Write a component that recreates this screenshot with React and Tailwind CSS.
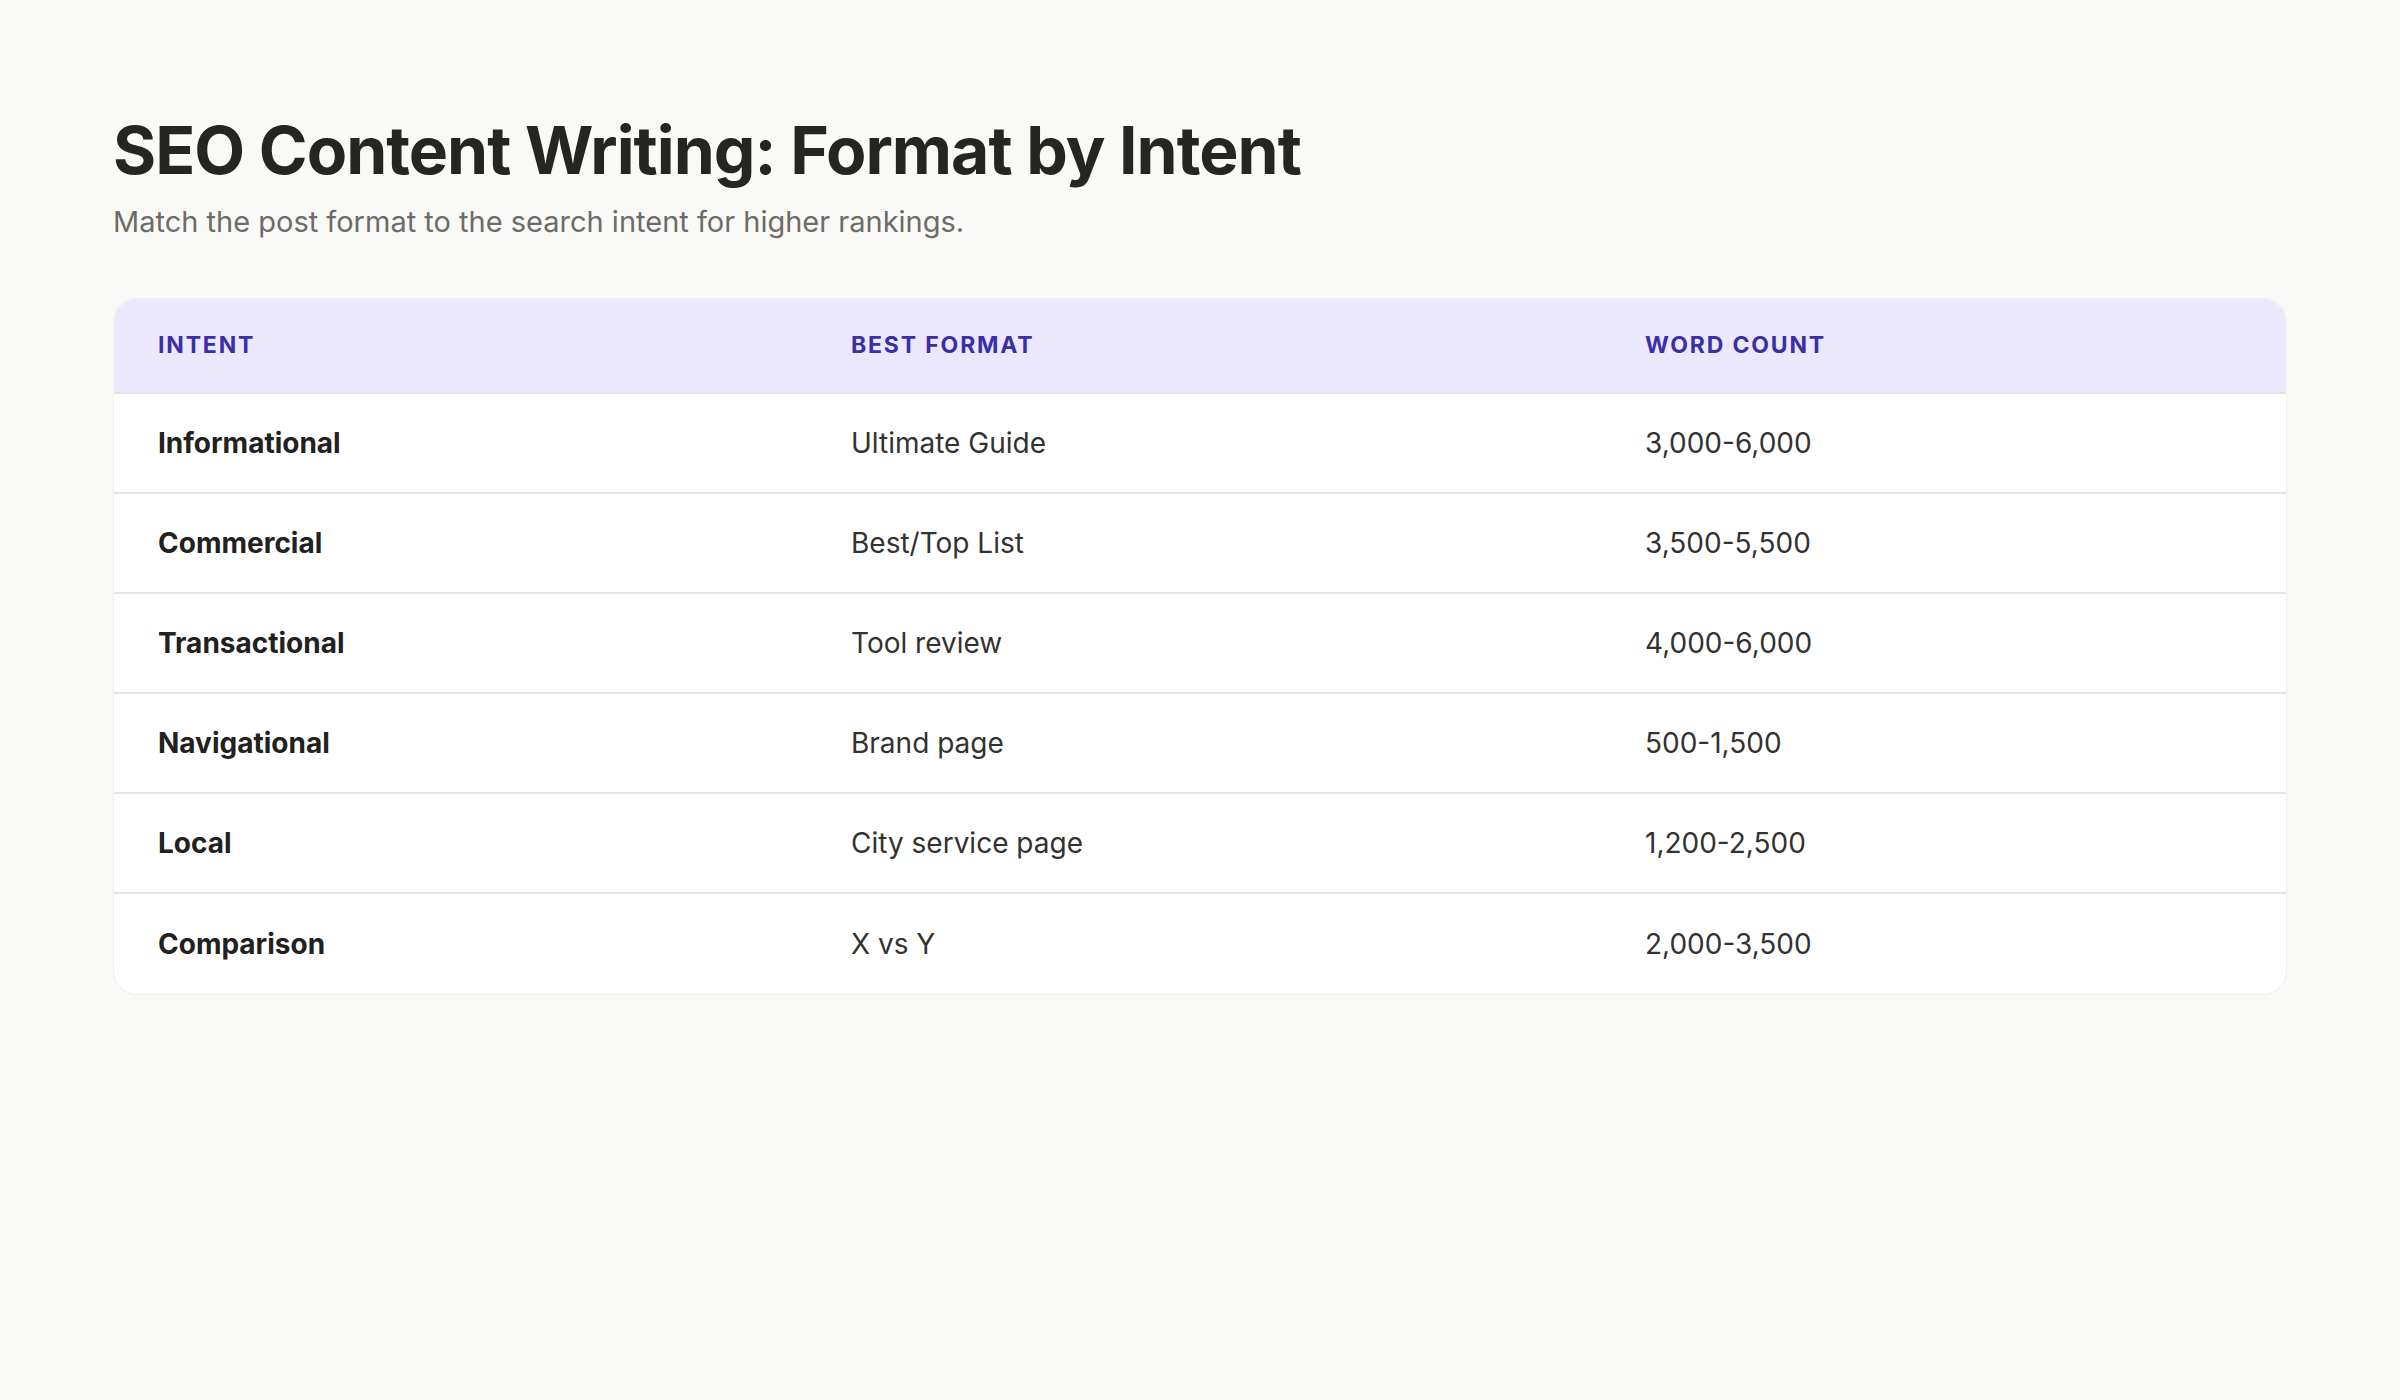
export default function App() {
  const rows = [
    ["Informational", "Ultimate Guide", "3,000-6,000"],
    ["Commercial", "Best/Top List", "3,500-5,500"],
    ["Transactional", "Tool review", "4,000-6,000"],
    ["Navigational", "Brand page", "500-1,500"],
    ["Local", "City service page", "1,200-2,500"],
    ["Comparison", "X vs Y", "2,000-3,500"],
  ];
  return (
    <div className="w-[2400px] h-[1400px] bg-[#f9f9f7] pl-[113px] pr-[113px] pt-[110px]" style={{ fontFamily: "Inter, 'Noto Sans', sans-serif" }}>
      <h1 className="text-[66px] leading-[80px] font-bold text-[#262524] tracking-[-0.015em]">SEO Content Writing: Format by Intent</h1>
      <p className="mt-[12px] text-[29px] leading-[40px] text-[#6e6b68]">Match the post format to the search intent for higher rankings.</p>
      <div className="mt-[56px] w-[2174px] bg-white rounded-[24px] overflow-hidden border border-[#f0efec]">
        <div className="grid grid-cols-[693px_794px_1fr] h-[95px] items-center bg-[#ebe8fd] border-b-2 border-[#e3e2e0] text-[23px] font-bold tracking-[0.08em] text-[#3a2fa6]">
          <div className="pl-[44px]">INTENT</div>
          <div className="pl-[44px]">BEST FORMAT</div>
          <div className="pl-[44px]">WORD COUNT</div>
        </div>
        {rows.map((r, i) => (
          <div key={i} className={"grid grid-cols-[693px_794px_1fr] h-[100px] items-center text-[28px] text-[#333230] " + (i < rows.length - 1 ? "border-b-2 border-[#e6e5e3]" : "")}>
            <div className="pl-[44px] font-bold text-[#222120]">{r[0]}</div>
            <div className="pl-[44px]">{r[1]}</div>
            <div className="pl-[44px]">{r[2]}</div>
          </div>
        ))}
      </div>
    </div>
  );
}
